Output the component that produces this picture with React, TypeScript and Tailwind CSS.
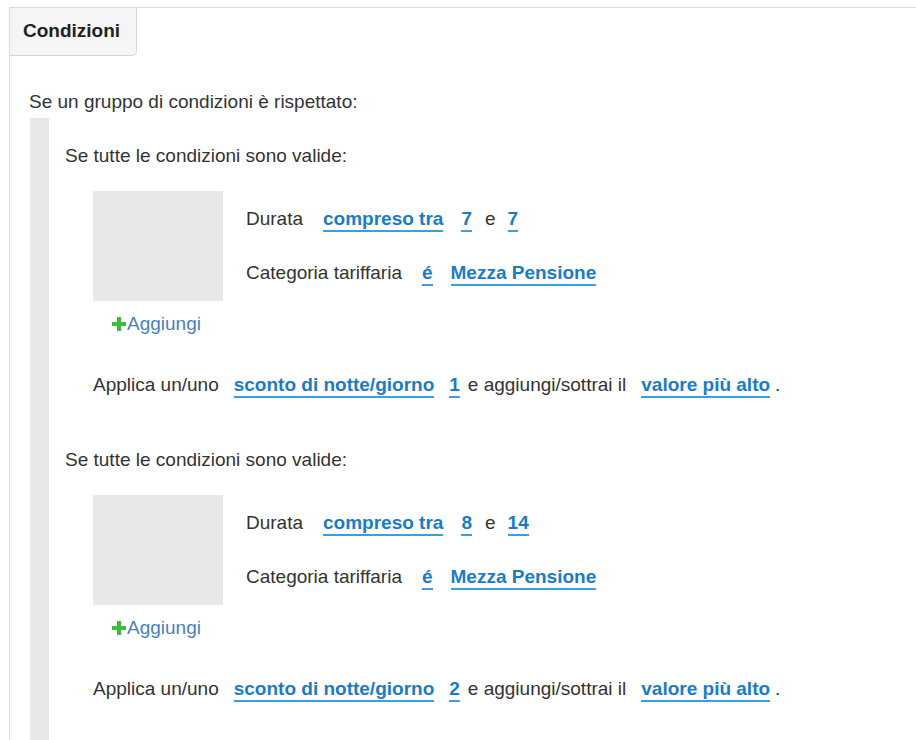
import type { ReactNode } from "react";

type Part = { text: string; link?: boolean; ml: number };

const ml: Record<number, string> = {
  0: "",
  5: "ml-[5px]",
  8: "ml-[8px]",
  12: "ml-[12px]",
  13: "ml-[13px]",
  14: "ml-[14px]",
  15: "ml-[15px]",
  18: "ml-[18px]",
  20: "ml-[20px]",
};

function Token({ part }: { part: Part }) {
  const cls = ml[part.ml] ?? "";
  if (part.link) {
    return (
      <span
        className={`${cls} inline-block border-b-2 border-[#3d9de0] font-bold leading-[22px] text-[#1a7cc6]`}
      >
        {part.text}
      </span>
    );
  }
  return <span className={`${cls} leading-[22px]`}>{part.text}</span>;
}

function Line({ parts }: { parts: Part[] }) {
  return (
    <div className="flex h-[22px] items-start whitespace-pre">
      {parts.map((p, i) => (
        <Token key={i} part={p} />
      ))}
    </div>
  );
}

function PlusIcon() {
  return (
    <svg width="14" height="14" viewBox="0 0 14 14" className="shrink-0">
      <rect x="5" y="0" width="4" height="14" fill="#3dbb3d" />
      <rect x="0" y="5" width="14" height="4" fill="#3dbb3d" />
    </svg>
  );
}

function ConditionSet({ from, to, discount }: { from: string; to: string; discount: string }) {
  return (
    <div>
      <div className="leading-[22px]">Se tutte le condizioni sono valide:</div>

      <div className="ml-[28px] mt-[24px]">
        <div className="flex">
          <div className="h-[110px] w-[130px] shrink-0 bg-[#e8e8e8]" />
          <div className="ml-[23px] flex flex-col gap-[32px] pt-[17px]">
            <Line
              parts={[
                { text: "Durata", ml: 0 },
                { text: "compreso tra", link: true, ml: 20 },
                { text: from, link: true, ml: 18 },
                { text: "e", ml: 13 },
                { text: to, link: true, ml: 12 },
              ]}
            />
            <Line
              parts={[
                { text: "Categoria tariffaria", ml: 0 },
                { text: "é", link: true, ml: 20 },
                { text: "Mezza Pensione", link: true, ml: 18 },
              ]}
            />
          </div>
        </div>

        <button className="ml-[19px] mt-[12px] flex h-[22px] items-center gap-[1px] text-[#4a7fc4]">
          <PlusIcon />
          <span className="leading-[22px]">Aggiungi</span>
        </button>

        <div className="mt-[39px]">
          <Line
            parts={[
              { text: "Applica un/uno", ml: 0 },
              { text: "sconto di notte/giorno", link: true, ml: 15 },
              { text: discount, link: true, ml: 15 },
              { text: "e aggiungi/sottrai il", ml: 8 },
              { text: "valore più alto", link: true, ml: 15 },
              { text: ".", ml: 5 },
            ]}
          />
        </div>
      </div>
    </div>
  );
}

function Panel({ title, children }: { title: string; children: ReactNode }) {
  return (
    <div className="ml-[9px] mt-[7px] border-l border-t border-[#dcdcdc]">
      <div className="flex h-[48px] w-[127px] items-center rounded-br-[5px] border-b border-r border-[#d6d6d6] bg-[#f5f5f5] pl-[13px] font-bold text-[#222]">
        {title}
      </div>
      {children}
    </div>
  );
}

export default function App() {
  return (
    <div className="h-[740px] w-[916px] overflow-hidden bg-white font-['Liberation_Sans',Arial,sans-serif] text-[19px] text-[#333]">
      <Panel title="Condizioni">
        <div className="pl-[19px] pt-[35px]">
          <div className="leading-[22px]">Se un gruppo di condizioni è rispettato:</div>
          <div className="mt-[5px] flex">
            <div className="ml-[1px] w-[19px] shrink-0 self-stretch bg-[#e8e8e8]" />
            <div className="flex flex-col gap-[53px] pb-[60px] pl-[16px] pt-[27px]">
              <ConditionSet from="7" to="7" discount="1" />
              <ConditionSet from="8" to="14" discount="2" />
            </div>
          </div>
        </div>
      </Panel>
    </div>
  );
}
